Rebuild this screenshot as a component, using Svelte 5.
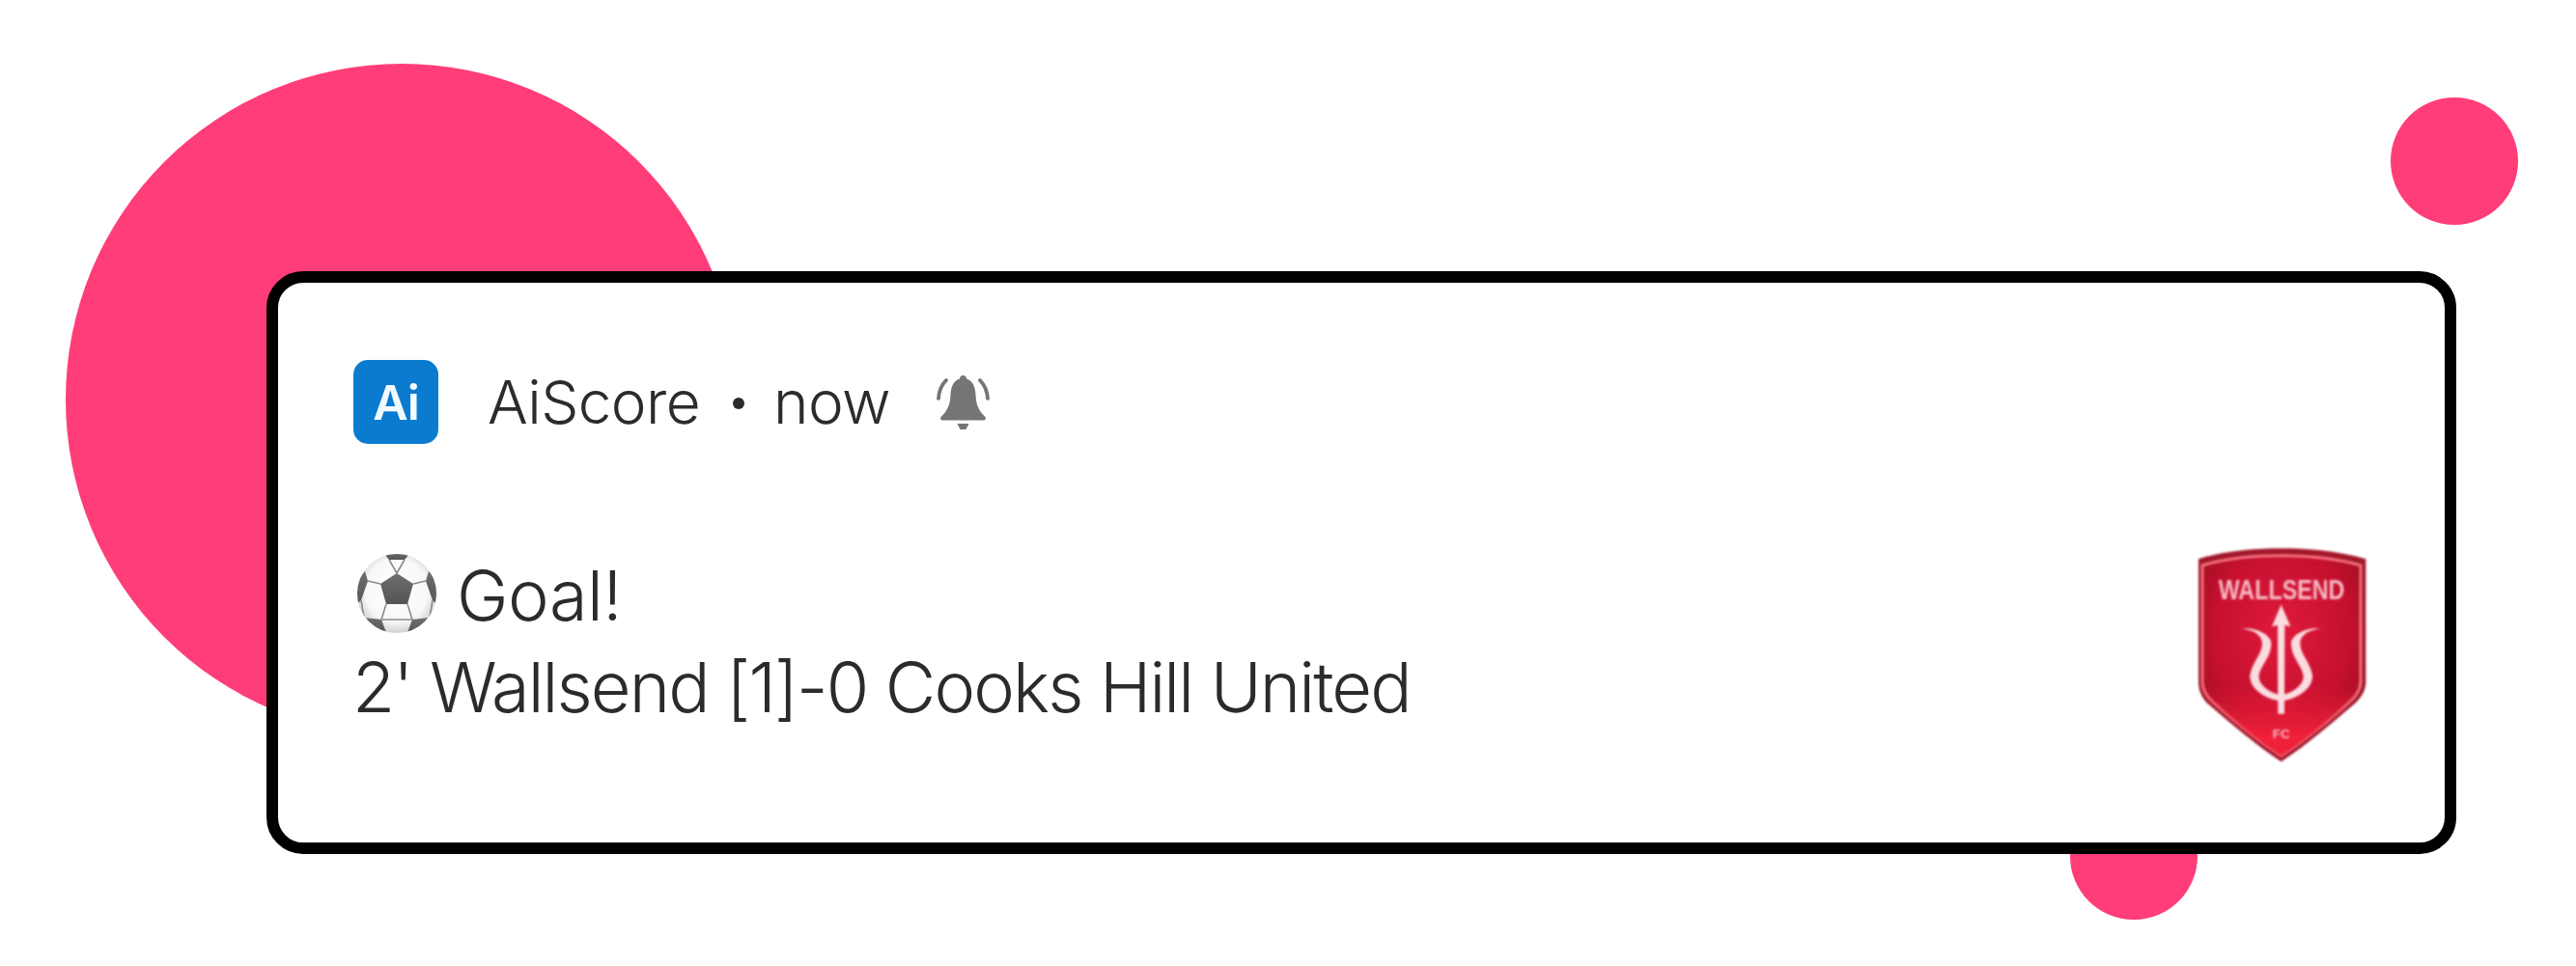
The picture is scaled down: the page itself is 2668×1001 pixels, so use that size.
<script>
  const prong = "M236 306 C262 304 306 318 306 350 C306 385 276 405 268 450 C266 494 320 526 365 530 L365 512 C330 505 294 480 296 452 C300 420 334 395 334 350 C334 325 285 296 236 306 Z";
</script>

<div class="page">
  <div class="blob big"></div>
  <div class="blob top"></div>
  <div class="blob low"></div>

  <section class="card">
    <header class="head">
      <div class="app-icon">Ai</div>
      <span class="app-name">AiScore</span>
      <span class="dot"></span>
      <span class="time">now</span>
      <svg class="bell" viewBox="0 0 56 56" aria-hidden="true">
        <path fill="#757575" d="M27.5 0 C29.5 0 31 1.5 31 3.5 C38 6 40 12 40.5 20 C41 31 44 37 50 42.5 C51.5 44 51 46.5 49 46.5 L6 46.5 C4 46.5 3.5 44 5 42.5 C11 37 14 31 14.5 20 C15 12 17 6 24 3.5 C24 1.5 25.5 0 27.5 0 Z"/>
        <path fill="#757575" d="M21.5 50 H33.5 L30.5 56 H24.5 Z"/>
        <path fill="none" stroke="#757575" stroke-width="3.8" stroke-linecap="round" d="M10 5 C5 10 2.5 16 2 24 M45 5 C50 10 52.5 16 53 24"/>
      </svg>
    </header>

    <div class="body">
      <div class="message">
        <div class="title">
          <svg class="ball" viewBox="0 0 84 84" aria-hidden="true">
            <defs>
              <radialGradient id="ballFill" cx="50%" cy="46%" r="55%">
                <stop offset="0%" stop-color="#ffffff"/>
                <stop offset="72%" stop-color="#f8f8f8"/>
                <stop offset="100%" stop-color="#cfcfcf"/>
              </radialGradient>
              <linearGradient id="ballDark" x1="0" y1="0" x2="0" y2="1">
                <stop offset="0%" stop-color="#6f6d6f"/>
                <stop offset="100%" stop-color="#555355"/>
              </linearGradient>
              <clipPath id="ballClip"><circle cx="42" cy="41" r="41"/></clipPath>
            </defs>
            <circle cx="42" cy="41" r="41" fill="url(#ballFill)"/>
            <g clip-path="url(#ballClip)">
              <g fill="url(#ballDark)">
                <path d="M42 20 L59 31 L53 52 L31 52 L25 31 Z"/>
                <path d="M27 -2 H57 L50 6 H34 Z"/>
                <path d="M9 18 L-2 30 L-2 54 L5 48 L12 28 Z"/>
                <path d="M75 18 L86 30 L86 54 L79 48 L72 28 Z"/>
                <path d="M8 66 L26 68 L32 84 L17 84 Z"/>
                <path d="M76 66 L58 68 L52 84 L67 84 Z"/>
              </g>
              <g stroke="#8a8a8a" stroke-width="1.6" fill="none">
                <path d="M34 6 L42 20 L50 6 M25 31 L12 28 M59 31 L72 28 M31 52 L26 68 M53 52 L58 68 M26 68 H58 M5 48 L8 66 M79 48 L76 66"/>
              </g>
            </g>
          </svg>
          <span>Goal!</span>
        </div>
        <div class="detail">2' Wallsend [1]-0 Cooks Hill United</div>
      </div>

      <svg class="crest" viewBox="105 55 525 665" aria-label="Wallsend FC">
        <defs>
          <radialGradient id="crestFill" cx="50%" cy="38%" r="60%">
            <stop offset="0%" stop-color="#e01a3c"/>
            <stop offset="70%" stop-color="#c61030"/>
            <stop offset="100%" stop-color="#a80f24"/>
          </radialGradient>
          <linearGradient id="crestLow" x1="0" y1="0" x2="0" y2="1">
            <stop offset="0.65" stop-color="#ee2038" stop-opacity="0"/>
            <stop offset="0.9" stop-color="#f02038"/>
          </linearGradient>
        </defs>
        <path d="M108 88 C190 62 280 55 365 55 C450 55 540 62 628 88 L628 470 C628 500 610 525 585 545 C520 600 440 670 365 718 C290 670 210 600 145 545 C120 525 108 500 108 470 Z" fill="#a3172b"/>
        <path d="M120 108 C200 85 285 78 365 78 C445 78 530 85 612 108 L612 470 C612 495 598 515 575 535 C515 590 440 650 365 700 C290 650 215 590 155 535 C132 515 120 495 120 470 Z" fill="url(#crestFill)" stroke="#f4727f" stroke-width="9"/>
        <path d="M120 108 C200 85 285 78 365 78 C445 78 530 85 612 108 L612 470 C612 495 598 515 575 535 C515 590 440 650 365 700 C290 650 215 590 155 535 C132 515 120 495 120 470 Z" fill="url(#crestLow)"/>
        <text class="crest-name" transform="translate(170 214) scale(1 1.36)" textLength="392" lengthAdjust="spacingAndGlyphs">WALLSEND</text>
        <g fill="#fbdde1" stroke="none">
          <path d="M365 230 L394 298 L376 294 L375 570 L355 570 L354 294 L336 298 Z"/>
          <path d={prong}/>
          <path d={prong} transform="matrix(-1 0 0 1 730 0)"/>
        </g>
        <text class="crest-fc" x="365" y="646" text-anchor="middle">FC</text>
      </svg>
    </div>
  </section>
</div>

<style>
  :global(body) {
    margin: 0;
    background: #ffffff;
  }

  .page {
    position: relative;
    box-sizing: border-box;
    width: 2668px;
    height: 1001px;
    padding: 281px 124px 0 276px;
    overflow: hidden;
    font-family: Inter, "Liberation Sans", sans-serif;
    font-weight: 300;
    color: #2b2b2b;
  }

  .blob {
    position: absolute;
    border-radius: 50%;
    background: #ff3d78;
  }

  .big {
    left: 68px;
    top: 66px;
    width: 696px;
    height: 696px;
  }

  .top {
    left: 2476px;
    top: 101px;
    width: 132px;
    height: 132px;
  }

  .low {
    left: 2144px;
    top: 821px;
    width: 132px;
    height: 132px;
  }

  .card {
    position: relative;
    box-sizing: border-box;
    height: 604px;
    padding: 80px 81px 0 78px;
    border: 12px solid #000000;
    border-radius: 38px;
    background: #ffffff;
  }

  .head {
    display: flex;
    align-items: center;
    height: 87px;
  }

  .app-icon {
    display: flex;
    align-items: center;
    justify-content: center;
    width: 88px;
    height: 87px;
    margin-right: 51px;
    border-radius: 15px;
    background: #0b7bd0;
    color: #f2fbff;
    font-size: 50px;
    font-weight: 600;
    letter-spacing: -1px;
    filter: blur(0.6px);
  }

  .app-name,
  .time {
    font-size: 62px;
    line-height: 87px;
    letter-spacing: -0.6px;
    filter: blur(0.4px);
  }

  .dot {
    width: 12px;
    height: 12px;
    margin: 2px 30px 0 34px;
    border-radius: 50%;
    background: #2b2b2b;
    filter: blur(0.4px);
  }

  .bell {
    width: 58px;
    height: 56px;
    margin-left: 47px;
    filter: blur(0.6px);
  }

  .body {
    display: flex;
    justify-content: space-between;
    align-items: flex-start;
    margin-top: 108px;
  }

  .title {
    display: flex;
    align-items: center;
    height: 96px;
    font-size: 72px;
    letter-spacing: -0.5px;
    filter: blur(0.4px);
  }

  .ball {
    width: 86px;
    height: 84px;
    margin: 0 19px 0 2px;
  }

  .detail {
    margin-left: -1px;
    font-size: 72px;
    line-height: 96px;
    letter-spacing: -1.85px;
    filter: blur(0.4px);
  }

  .crest {
    width: 175px;
    height: 222px;
    filter: blur(1px);
  }

  .crest-name {
    font-family: "Liberation Sans", sans-serif;
    font-size: 66px;
    font-weight: 700;
    fill: #f7b9c3;
  }

  .crest-fc {
    font-family: "Liberation Sans", sans-serif;
    font-size: 40px;
    font-weight: 700;
    fill: #f7b9c3;
  }
</style>
